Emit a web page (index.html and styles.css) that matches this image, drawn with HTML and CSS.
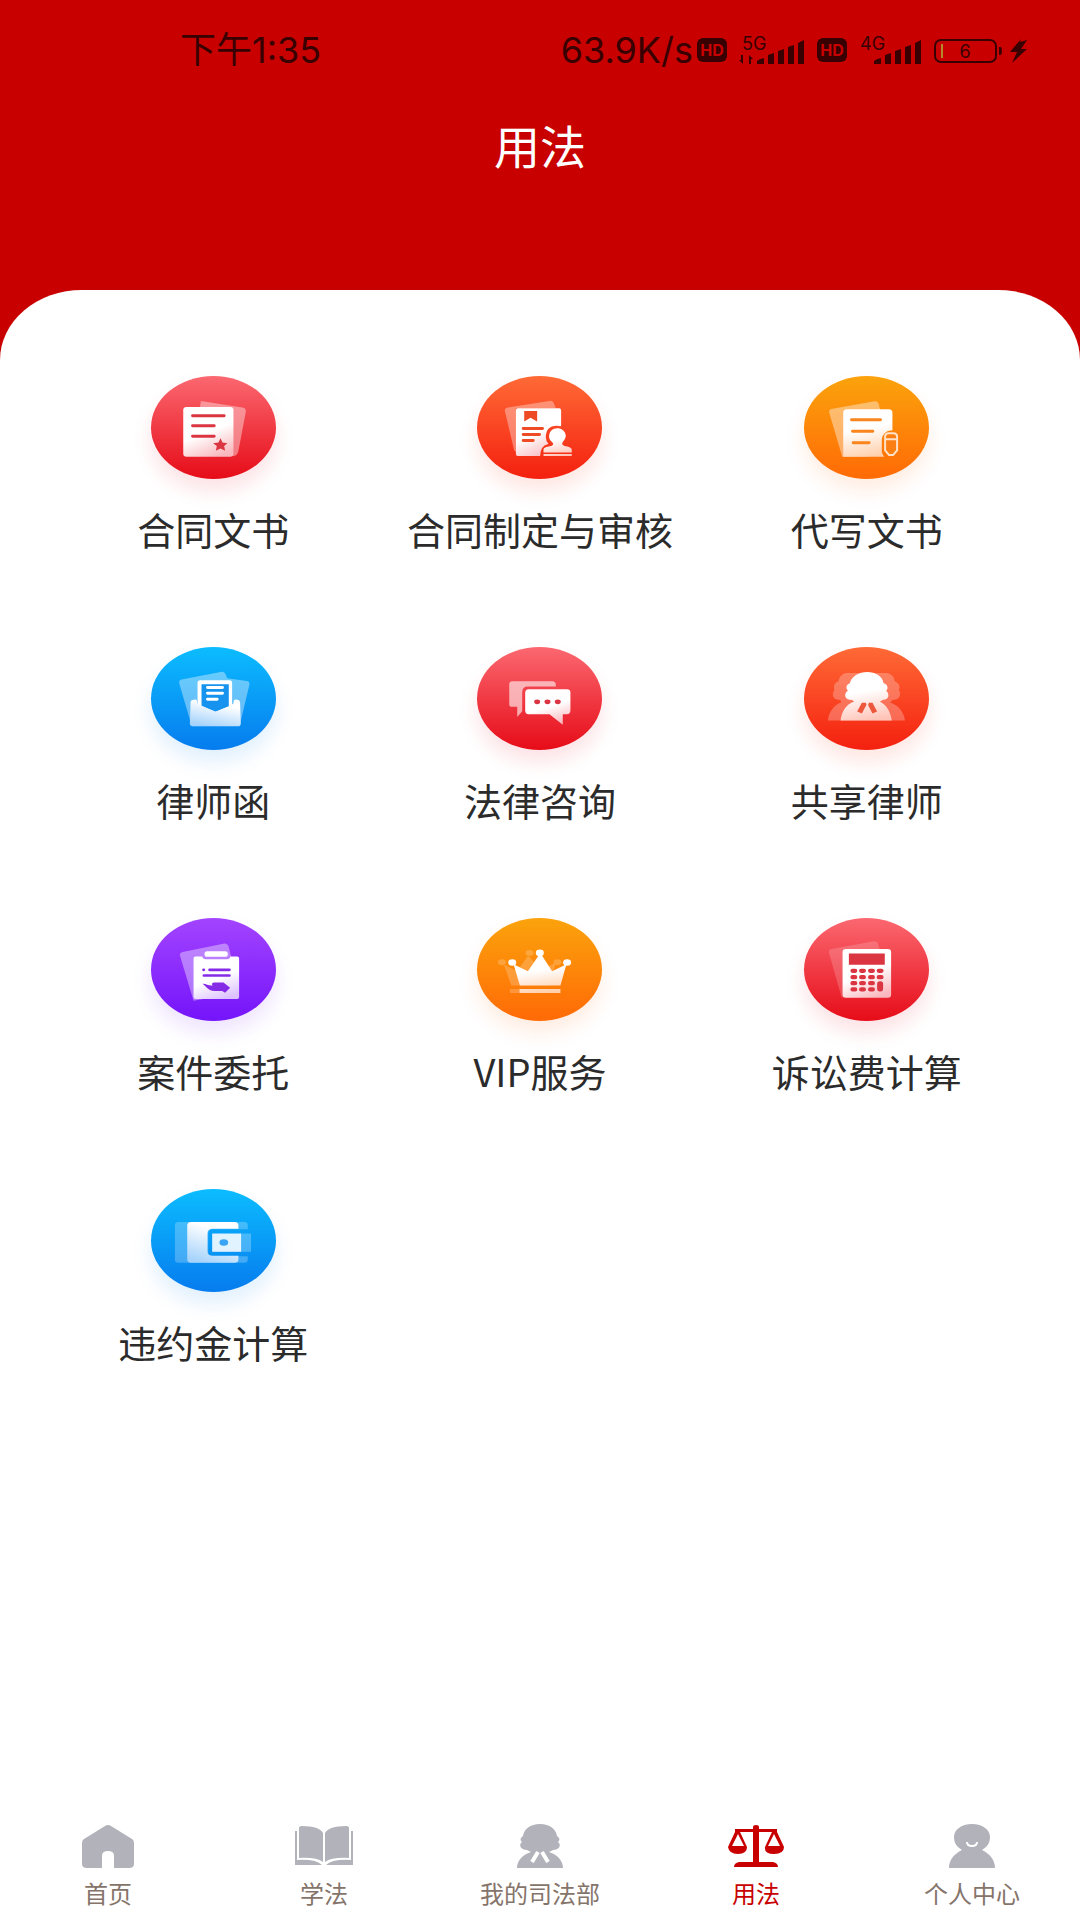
FILE: index.html
```html
<!DOCTYPE html>
<html lang="zh-CN">
<head>
  <meta charset="UTF-8" />
  <meta name="viewport" content="width=device-width, initial-scale=1.0"/>
  <title>用法</title>
  <link rel="stylesheet" href="styles.css">
</head>
<body>

  <!-- shared gradients -->
  <svg class="defs" width="0" height="0" aria-hidden="true">
    <defs>
      <linearGradient id="paperRed" x1="0.3" y1="0" x2="0.7" y2="1"><stop offset="0.5" stop-color="#fff"/><stop offset="1" stop-color="#f9b8bd"/></linearGradient>
      <linearGradient id="paperOrange" x1="0.4" y1="0" x2="0.6" y2="1"><stop offset="0.4" stop-color="#fff"/><stop offset="1" stop-color="#ffcfab"/></linearGradient>
      <linearGradient id="paperPink" x1="0.4" y1="0" x2="0.6" y2="1"><stop offset="0.4" stop-color="#fff"/><stop offset="1" stop-color="#ffc4b8"/></linearGradient>
      <linearGradient id="paperBlue" x1="0.7" y1="0" x2="0.3" y2="1"><stop offset="0.2" stop-color="#fff"/><stop offset="1" stop-color="#a6d3fb"/></linearGradient>
      <linearGradient id="paperPurple" x1="0.3" y1="0" x2="0.7" y2="1"><stop offset="0.5" stop-color="#fff"/><stop offset="1" stop-color="#dcc0ff"/></linearGradient>
    </defs>
  </svg>

  <header class="header">
    <div class="status">
      <span class="time">下午1:35</span>
      <div class="status-right">
        <span class="speed">63.9K/s</span>
        <span class="hd">HD</span>
        <svg class="signal" viewBox="0 0 66 32" width="66" height="32">
          <text x="3" y="16">5G</text>
          <path d="M4 21v9l-4-4h2v-5zM10 30v-9l4 4h-2v5z"/>
          <path d="M18 30v-3q2-2 7-3v6zM29 30v-9l6-2v11zM39 30v-13l6-2v15zM49 30v-17l6-2v19zM59 30v-21l6-3v24z"/>
        </svg>
        <span class="hd">HD</span>
        <svg class="signal" viewBox="0 0 63 32" width="63" height="32">
          <text x="1" y="16">4G</text>
          <path d="M15 30v-3q2-2 7-3v6zM26 30v-9l6-2v11zM36 30v-13l6-2v15zM46 30v-17l6-2v19zM56 30v-21l6-3v24z"/>
        </svg>
        <svg class="battery" viewBox="0 0 94 28" width="94" height="28">
          <rect class="shell" x="1" y="4" width="61" height="22" rx="6"/>
          <rect class="level" x="7" y="8" width="2" height="14"/>
          <text x="31" y="22" text-anchor="middle">6</text>
          <path d="M65 11h2q2 4 0 8h-2zM87 3L76 16h7l-5 11 15-14h-6l6-9-7 2z"/>
        </svg>
      </div>
    </div>
    <h1>用法</h1>
  </header>

  <main class="sheet">
    <div class="services">
      <a class="service" href="#">
        <span class="icon red">
          <svg viewBox="93 78 376 308">
            <path fill="#fff" opacity=".4" d="M243 152l125 20q12 2 10 14l-22 116q-3 16-16 16l-118-20z"/>
            <rect x="190" y="170" width="151" height="150" rx="10" fill="url(#paperRed)"/>
            <path stroke="#dc3542" stroke-width="9" stroke-linecap="round" d="M218 197h95M218 227h65M218 258h65"/>
            <path fill="#dc3542" d="M302 264l6 13 15 2-10 9 3 14-14-7-14 7 3-14-11-9 16-2z"/>
          </svg>
        </span>
        <span class="name">合同文书</span>
      </a>
      <a class="service" href="#">
        <span class="icon vermilion">
          <svg viewBox="261 78 376 308">
            <path fill="#fff" opacity=".35" d="M354 172l124-20q12-1 15 9l5 13H378v130l-5-2-28-119q-2-9 9-11z"/>
            <path fill="url(#paperRed)" d="M378 180q0-6 6-6h124q6 0 6 6v48q-46-8-46 34 1 13 8 20-25 5-25 36H384q-6 0-6-6z"/>
            <path fill="#ee4a24" d="M403 182h39v32l-20-11-19 11z"/>
            <path stroke="#ee4a24" stroke-width="9" stroke-linecap="round" d="M400 235h58M400 253h49M400 271h30"/>
            <path fill="url(#paperPink)" d="M478 262c-3-36 48-36 50-5 0 13-13 18-10 26 2 7 28 4 28 16v8h-85v-8c0-12 26-8 29-16 2-7-11-10-12-21zM461 312h85v6h-85z"/>
          </svg>
        </span>
        <span class="name">合同制定与审核</span>
      </a>
      <a class="service" href="#">
        <span class="icon orange">
          <svg viewBox="102 78 376 308">
            <path fill="#fff" opacity=".4" d="M184 176l130-23q10-1 13 9l20 84-50 74h-80l-39-132q-2-10 6-12z"/>
            <path fill="url(#paperOrange)" d="M220 188q0-11 11-11h126q11 0 11 11v52q-31 2-32 29v35q1 9 7 16H220z"/>
            <path stroke="#f9851c" stroke-width="9" stroke-linecap="round" d="M245 209h87M248 243h61M250 278h48"/>
            <path fill="#fb7f12" stroke="#ffe2c9" stroke-width="6" d="M346 260q0-11 11-11h14q11 0 11 11v41l-12 14h-12l-12-14zM348 267h33"/>
          </svg>
        </span>
        <span class="name">代写文书</span>
      </a>
      <a class="service" href="#">
        <span class="icon blue">
          <svg viewBox="62 51 376 308">
            <path fill="#fff" opacity=".38" d="M154 148l117-23q12-2 17 10l3 9 59 8q10 2 8 12l-30 125H185l-38-129q-2-10 7-12z"/>
            <path fill="#fff" d="M202 158q0-8 8-8h88q8 0 8 8v72l-50 28-54-28z"/>
            <path fill="#1693ee" d="M214 162h82v66l-40 17-42-18z"/>
            <path stroke="#fff" stroke-width="9" stroke-linecap="round" d="M232 172h45M232 189h45M232 207h29"/>
            <path fill="url(#paperBlue)" d="M181 216q0-8 15-8 5 0 5 11l11 8 44 18 42-17 12-8q0-12 6-12 14 0 14 10l2 62q0 8-8 8h-138q-8 0-7-10z"/>
          </svg>
        </span>
        <span class="name">律师函</span>
      </a>
      <a class="service" href="#">
        <span class="icon red">
          <svg viewBox="51 51 376 308">
            <path fill="#fff" opacity=".6" d="M158 153h119q11 0 11 11v5h-84q-17 0-17 17v57l-15 18v-31h-16q-8 0-8-8v-59q0-10 10-10z"/>
            <path fill="url(#paperRed)" d="M206 177h115q11 0 11 10v54q0 11-11 11h-12v32l-40-32h-63q-10 0-10-11v-53q0-11 10-11z"/>
            <g fill="#dc3542"><ellipse cx="232" cy="215" rx="9" ry="7"/><ellipse cx="263" cy="215" rx="9" ry="7"/><ellipse cx="294" cy="215" rx="9" ry="7"/></g>
          </svg>
        </span>
        <span class="name">法律咨询</span>
      </a>
      <a class="service" href="#">
        <span class="icon vermilion">
          <svg viewBox="72 51 376 308">
            <path fill="#fff" opacity=".26" d="M198 128h122c22 3 24 20 25 25 13 5 18 17 12 26 11 16-1 32-18 30l-8 8c27 9 41 29 45 54H144c2-26 20-49 41-55l-5-7c-18 2-28-14-16-30-5-12 1-22 12-26 1-10 8-22 22-25z"/>
            <path fill="url(#paperPink)" d="M262 125c25 0 47 14 49 33 14 4 15 18 8 24 12 10 8 28-9 27l-10 6c17 6 32 27 36 56H182c4-29 17-48 41-57l-8-5c-19 2-26-17-11-28-8-8-4-19 6-22 5-21 27-34 52-34z"/>
            <path fill="#ec573d" d="M246 218h12l2 6-14 26-14-6zM267 218h11l14 26-14 6-13-25z"/>
          </svg>
        </span>
        <span class="name">共享律师</span>
      </a>
      <a class="service" href="#">
        <span class="icon purple">
          <svg viewBox="62 52 376 308">
            <path fill="#fff" opacity=".38" d="M157 153l126-25q9-1 12 8l26 100-85 56-46 8-41-136q-1-9 8-11z"/>
            <path fill="url(#paperPurple)" d="M190 172q0-5 6-5h20q2 8 11 8h63q9 0 11-8h20q6 0 6 5v117q0 6-6 6H196q-6 0-6-6z"/>
            <rect x="223" y="151" width="70" height="17" rx="8" fill="#fff"/>
            <path stroke="#852be8" stroke-width="8" stroke-linecap="round" d="M220 207h1M238 207h60M221 224h77"/>
            <path fill="#852be8" d="M217 249c12-1 17 7 31 5-5-4-2-9 6-9h26l20 16-15 15-9-5h-24c-17 0-22-13-35-22z"/>
          </svg>
        </span>
        <span class="name">案件委托</span>
      </a>
      <a class="service" href="#">
        <span class="icon orange">
          <svg viewBox="1041 52 376 308">
            <g fill="#fff" opacity=".2">
              <path d="M1122 191l39 20 34-46 38 42 45-22-19 69h-115zM1140 265h120v12h-120z"/>
              <ellipse cx="1116" cy="184" rx="12" ry="9"/><ellipse cx="1199" cy="156" rx="12" ry="9"/><ellipse cx="1283" cy="184" rx="12" ry="9"/>
            </g>
            <g fill="url(#paperOrange)">
              <path d="M1151 190l43 21 34-49h7l32 49 43-21-18 64h-122zM1169 265h123v12h-123z"/>
            </g>
            <g fill="#fff"><ellipse cx="1147" cy="185" rx="12" ry="10"/><ellipse cx="1230" cy="156" rx="12" ry="10"/><ellipse cx="1312" cy="185" rx="12" ry="10"/></g>
          </svg>
        </span>
        <span class="name">VIP服务</span>
      </a>
      <a class="service" href="#">
        <span class="icon red">
          <svg viewBox="72 52 376 308">
            <path fill="#fff" opacity=".18" d="M155 144l127-23q10-1 13 9l25 80-85 80h-50l-38-135q-1-9 8-11z"/>
            <rect x="188" y="144" width="146" height="147" rx="10" fill="url(#paperRed)"/>
            <path fill="#dc3542" d="M207 158h108v34H207z"/>
            <path stroke="#dc3542" stroke-width="13" stroke-linecap="round" d="M218 210h8M244 210h8M271 210h8M297 210h8M218 229h8M244 229h8M271 229h8M297 229h8M218 247h8M244 247h8M271 247h8M218 266h8M244 266h8M271 266h8"/>
            <rect x="292" y="241" width="18" height="31" rx="8" fill="#dc3542"/>
          </svg>
        </span>
        <span class="name">诉讼费计算</span>
      </a>
      <a class="service" href="#">
        <span class="icon blue">
          <svg viewBox="62 54 376 308">
            <path fill="#fff" opacity=".24" d="M145 152h198q10 0 10 9v13H250q-16 0-16 15v52q0 14 16 14h103v10q0 10-10 10H145q-11 0-11-10V162q0-10 11-10z"/>
            <path fill="url(#paperBlue)" d="M182 152h131q12 0 12 11v10h-77q-16 0-16 14v54q0 13 16 13h77v11q0 10-12 10H182q-11 0-11-11V163q0-11 11-11z"/>
            <path fill="#fff" opacity=".26" d="M331 187h32v55h-32z"/>
            <path fill="#fff" opacity=".88" d="M246 187h87v55h-87z"/>
            <ellipse cx="281" cy="214" rx="13" ry="10" fill="#3aa3f3"/>
          </svg>
        </span>
        <span class="name">违约金计算</span>
      </a>
    </div>
  </main>

  <nav class="tabbar">
    <a class="tab" href="#">
      <svg viewBox="0 0 60 44">
        <path d="M27 2q3-2 6 0l21 13q2 1 2 4v21q0 4-5 4H36V32q0-5-6-5t-6 5v12H9q-5 0-5-4V19q0-3 2-4z"/>
      </svg>
      <span>首页</span>
    </a>
    <a class="tab" href="#">
      <svg viewBox="0 0 60 44">
        <path d="M5 4q0-2 3-2 17 0 21 7v29q-7-5-24-4zM55 4q0-2-3-2-17 0-21 7v29q7-5 24-4zM1 7h2v29q19-1 25 5H1zM59 7h-2v29q-19-1-25 5h27z"/>
      </svg>
      <span>学法</span>
    </a>
    <a class="tab" href="#">
      <svg viewBox="0 0 60 44">
        <path d="M30 0c10 0 16 5 17 12 4 3 2 5 1 6 4 3 1 8-5 8l-4 2c9 3 14 9 14 16H7c0-7 5-13 14-16l-4-2c-6 0-9-5-5-8-1-1-3-3 1-6C14 5 20 0 30 0z"/>
        <path class="collar" d="M28 28l-6 10M32 28l6 10"/>
      </svg>
      <span>我的司法部</span>
    </a>
    <a class="tab active" href="#">
      <svg viewBox="0 0 60 44">
        <path d="M27 3q0-2 3-2t3 2v2h18v3l7 15q0 7-10 7t-9-7l7-15H33v30h14q5 1 5 5H8q0-4 5-5h14V8H14l7 15q0 7-9 7T2 23L9 8V5h18zM12 10L6 22h12zM48 10l-6 12h12z" fill-rule="evenodd"/>
      </svg>
      <span>用法</span>
    </a>
    <a class="tab" href="#">
      <svg viewBox="0 0 60 44">
        <path d="M30 0c11 0 18 6 18 13 0 6-3 10-8 13 8 4 13 10 13 18H7c0-8 5-14 13-18-5-3-8-7-8-13C12 6 19 0 30 0z"/>
        <path class="smile" d="M25 18q0 4 5 4t5-4"/>
      </svg>
      <span>个人中心</span>
    </a>
  </nav>

</body>
</html>
```

FILE: styles.css
```css
* {
  box-sizing: border-box;
}
body {
  margin: 0;
  min-height: 100vh;
  display: flex;
  flex-direction: column;
  background-color: #fff;
  font-family: "Noto Sans CJK SC", sans-serif;
  color: #2b2b2b;
}
a {
  color: inherit;
  text-decoration: none;
}
.defs {
  position: absolute;
}

/* header */
.header {
  background-color: #c80000;
  padding-bottom: 184px;
}
.status {
  display: flex;
  justify-content: space-between;
  align-items: center;
  height: 100px;
  padding: 0 52px 0 180px;
  font-family: Inter, "Noto Sans CJK SC", sans-serif;
  font-size: 36px;
  line-height: 40px;
  color: #380000;
}
.status-right {
  display: flex;
  align-items: center;
  gap: 12px;
}
.speed {
  margin-right: -8px;
}
.hd {
  width: 30px;
  border-radius: 6px;
  background-color: #380000;
  color: #c80000;
  font-size: 16px;
  font-weight: 700;
  line-height: 24px;
  text-align: center;
}
.signal,
.battery {
  fill: #380000;
  font-size: 18px;
}
.battery .shell {
  fill: none;
  stroke: #380000;
  stroke-width: 2px;
}
.battery .level {
  fill: #b5882c;
}
.header h1 {
  margin: 0;
  padding-top: 12px;
  font-size: 46px;
  font-weight: 400;
  line-height: 64px;
  text-align: center;
  color: #fff;
}

/* service grid */
.sheet {
  flex: 1;
  margin-top: -70px;
  padding: 86px 50px 0;
  background-color: #fff;
  border-radius: 82px 82px 0 0 / 70px 70px 0 0;
}
.services {
  display: grid;
  grid-template-columns: repeat(3, 1fr);
  row-gap: 94px;
}
.service {
  display: flex;
  flex-direction: column;
  align-items: center;
  gap: 26px;
}
.icon {
  width: 125px;
  height: 103px;
  border-radius: 50%;
}
.icon svg {
  display: block;
  width: 100%;
  height: 100%;
}
.red {
  background: linear-gradient(#fb6870, #e60c18);
  box-shadow: 0 12px 20px rgba(230, 20, 40, 0.12);
}
.vermilion {
  background: linear-gradient(#ff6a36, #f4200f);
  box-shadow: 0 12px 20px rgba(244, 50, 20, 0.12);
}
.orange {
  background: linear-gradient(#fba30c, #ff6a06);
  box-shadow: 0 12px 20px rgba(255, 110, 20, 0.12);
}
.blue {
  background: linear-gradient(#0cbcff, #067cee);
  box-shadow: 0 12px 20px rgba(10, 130, 240, 0.12);
}
.purple {
  background: linear-gradient(#a344ff, #7414fa);
  box-shadow: 0 12px 20px rgba(120, 30, 250, 0.12);
}
.name {
  font-size: 38px;
  line-height: 48px;
}

/* bottom tabs */
.tabbar {
  display: grid;
  grid-template-columns: repeat(5, 1fr);
  padding-bottom: 10px;
}
.tab {
  display: flex;
  flex-direction: column;
  align-items: center;
  gap: 8px;
  font-size: 24px;
  line-height: 34px;
  color: #85746a;
}
.tab svg {
  width: 60px;
  height: 44px;
  fill: #b2b3ba;
}
.tab .smile,
.tab .collar {
  fill: none;
  stroke: #fff;
  stroke-width: 2px;
}
.tab .collar {
  stroke-width: 4px;
}
.tab.active {
  color: #c80000;
}
.tab.active svg {
  fill: #c80000;
}
```
